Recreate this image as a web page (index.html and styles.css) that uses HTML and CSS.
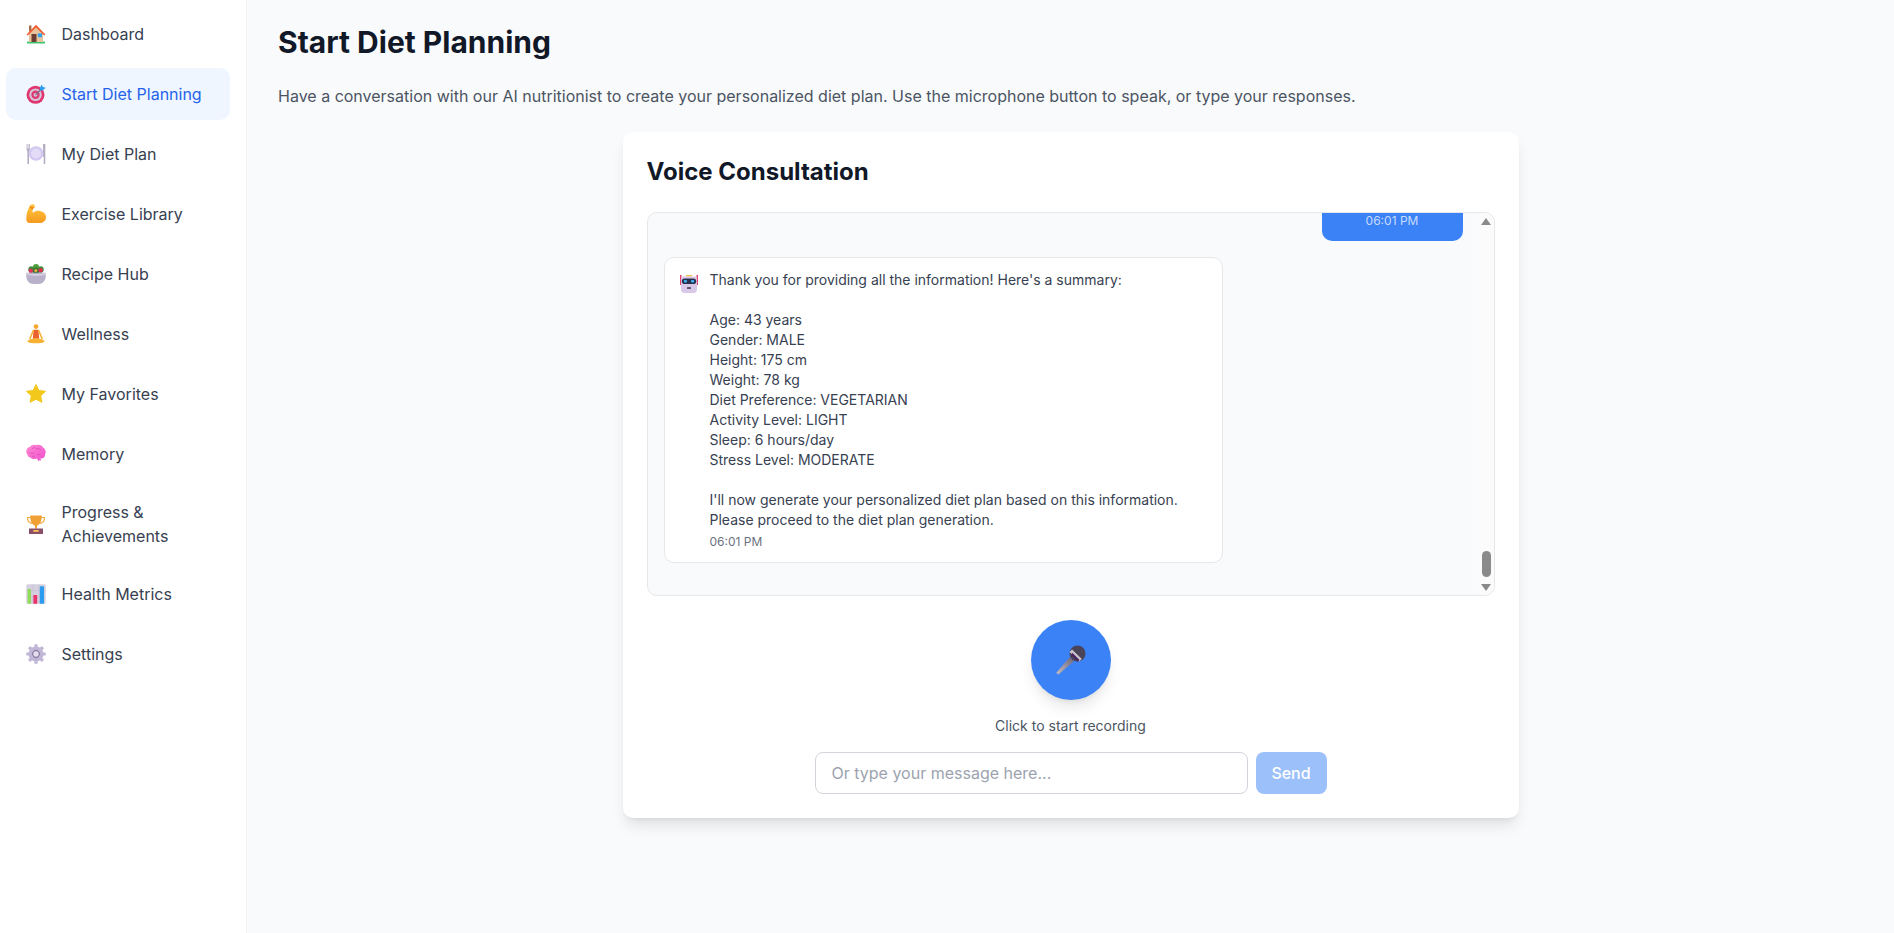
FILE: index.html
```html
<!DOCTYPE html>
<html lang="en">
<head>
<meta charset="utf-8">
<title>Start Diet Planning</title>
<link rel="stylesheet" href="styles.css">
</head>
<body>
<div class="app">
  <nav class="sidebar">
    <a class="nav-item"><svg class="nav-icon" viewBox="0 0 20 20"><rect x="1" y="17.600" width="18" height="1.900" fill="#3fc46f"/><rect x="3" y="1.500" width="2.400" height="6" fill="#a56a4a"/><path d="M3 9.500 10 3.500l7 6V18H3z" fill="#e9c39b"/><path d="M.6 10.600 10 .8l9.400 9.800-1.200 1L10 3.400 1.800 11.600z" fill="#ef5a2e"/><rect x="5.500" y="10" width="5" height="8" fill="#6b3d33"/><rect x="11.800" y="9.400" width="4.200" height="3.800" fill="#2fa3ee"/></svg><span>Dashboard</span></a>
    <a class="nav-item active"><svg class="nav-icon" viewBox="0 0 20 20"><circle cx="9.500" cy="10.800" r="9" fill="#e0356f"/><circle cx="9.500" cy="10.800" r="6.300" fill="#d8c4d8"/><circle cx="9.500" cy="10.800" r="4.200" fill="#dc3a72"/><circle cx="9.500" cy="10.800" r="1.900" fill="#d8c4d8"/><path d="M9.500 10.800 16 4.300" stroke="#6d6f86" stroke-width="1.200"/><path d="M13.800 4.200 15.600.4l1.300 2.700 2.900.7-3 2.400-2.700.6z" fill="#2c9cf0"/></svg><span>Start Diet Planning</span></a>
    <a class="nav-item"><svg class="nav-icon" viewBox="0 0 20 20"><path d="M.6 0v6l.8 1.400V20h1.600V7.400L3.800 6V0H3v4.500h-.5V0h-.5v4.500h-.5V0z" fill="#b4aec2"/><path d="M17 0h2.300v20H17.700v-7H17z" fill="#b4aec2"/><circle cx="10" cy="9.500" r="7.300" fill="#d3c8f0"/><circle cx="10" cy="9.500" r="4.900" fill="#e3dcf6"/></svg><span>My Diet Plan</span></a>
    <a class="nav-item"><svg class="nav-icon" viewBox="0 0 20 20"><defs><linearGradient id="arm" x1="0" y1="0" x2="0" y2="1"><stop offset="0" stop-color="#ffc83d"/><stop offset="1" stop-color="#f59a1f"/></linearGradient></defs><path d="M.3 15C.3 10 1.500 6 3.500 2.500 4 .8 6 0 7.500.5 9 1 9.500 2.500 8.500 3.600 7.500 4.500 6.600 5 6.500 6 6.400 7 6.600 8 7 9 8.500 7.300 11 6.700 13.500 6.900 17 7.200 20 9.500 20 13 20 16.500 17.500 19 14 19H3.500C1.500 19 .3 17.500.3 15z" fill="url(#arm)"/><path d="M3.500 2.500C5 2.200 6.800 2.800 8.500 3.600 7.500 4.500 6.600 5 6.500 6 5.200 5.200 4 4 3.500 2.500z" fill="#f08b1f"/></svg><span>Exercise Library</span></a>
    <a class="nav-item"><svg class="nav-icon" viewBox="0 0 20 20"><circle cx="5.500" cy="5.500" r="3.200" fill="#3f8f3f"/><circle cx="14.500" cy="5.500" r="3.200" fill="#3f8f3f"/><circle cx="10" cy="3" r="3" fill="#4c9c3c"/><circle cx="10" cy="7" r="3.200" fill="#356f35"/><circle cx="4.800" cy="6.800" r="2.200" fill="#e0335a"/><circle cx="14.600" cy="6.300" r="2.300" fill="#d8304e"/><circle cx="9.800" cy="6.500" r="1.500" fill="#f0b03a"/><path d="M.3 8.800h19.400v3.200c0 4.500-3 8-7 8H7.300c-4 0-7-3.500-7-8z" fill="#b9b1ca"/><path d="M.3 8.800c2 1 4 1.300 9.700 1.300s7.700-.3 9.700-1.300v1.500c-2 1-4 1.400-9.700 1.400S2.300 11.300.3 10.300z" fill="#d8d3e2"/></svg><span>Recipe Hub</span></a>
    <a class="nav-item"><svg class="nav-icon" viewBox="0 0 20 20"><circle cx="10" cy="2.600" r="2.400" fill="#f5a833"/><path d="M7.600 5.800h4.800l.8 9H6.800z" fill="#e8622c"/><path d="M7.300 6.500 4 14.500M12.700 6.500 16 14.500" stroke="#f7b33d" stroke-width="1.700" stroke-linecap="round" fill="none"/><path d="M1 17.300c3-2.300 5.500-3 9-3s6 .7 9 3c-2 1.700-4 2-9 2s-7-.3-9-2z" fill="#f7b236"/></svg><span>Wellness</span></a>
    <a class="nav-item"><svg class="nav-icon" viewBox="0 0 20 20"><path d="m10 .5 2.900 6 6.600.8-4.800 4.500 1.200 6.500L10 15.200 4.100 18.300l1.200-6.500L.5 7.300l6.600-.8z" fill="#f2c81d" stroke="#f2c81d" stroke-linejoin="round"/></svg><span>My Favorites</span></a>
    <a class="nav-item"><svg class="nav-icon" viewBox="0 0 20 20"><defs><linearGradient id="brain" x1="0" y1="0" x2="1" y2="1"><stop offset="0" stop-color="#ff8ad0"/><stop offset="1" stop-color="#f04fd0"/></linearGradient></defs><path d="M.6 9C-.5 6 1.500 3 4 3 5 1 8 .3 10 1.200 12.500.2 16 1 17 3.500 19.300 4.500 20.500 8 19 10.500 19.300 13 17 15 14.500 14.500L15 17 13.500 16 12.500 17.500 11 14.500C8 15.500 5.500 15 4.500 13.500 2.500 13.500 1.500 11.500.6 9z" fill="url(#brain)"/><path d="M6 4.500c2-1.200 4-.8 5 .6 1.500-.8 3.200-.4 4 1M3.500 8.500c1.500 1 3.500 1 5 0M11 10c1 1 2.500 1 3.500.2M6 12c1 .6 2 .6 3 0" fill="none" stroke="#d94bb2" stroke-width=".8"/></svg><span>Memory</span></a>
    <a class="nav-item"><svg class="nav-icon" viewBox="0 0 20 20"><path d="M4.500 3.500H1.500c0 3.500 1.600 5.500 4.500 5.800M15.500 3.500h3c0 3.500-1.600 5.500-4.500 5.800" fill="none" stroke="#f2a93b" stroke-width="1.200"/><path d="M4.200 1.500h11.600c.2 5.500-1.800 9.300-4.800 10.300v2.700H9v-2.700C6 10.800 4 7 4.200 1.500z" fill="#f0a035"/><path d="M3 14.500h14V20H3z" fill="#8a4f66"/><rect x="7.300" y="16" width="5.400" height="1.800" fill="#f6c253"/></svg><span>Progress &amp; Achievements</span></a>
    <a class="nav-item"><svg class="nav-icon" viewBox="0 0 20 20"><rect x=".3" y=".2" width="19.400" height="19.600" rx="1.500" fill="#d5d0df"/><path d="M7 .2v19.600M13 .2v19.600M.3 6.500h19.400M.3 13h19.400" stroke="#c1bbcc" stroke-width=".5"/><rect x="1.600" y="5" width="3.400" height="14.800" rx=".6" fill="#8fdc5b"/><rect x="7.400" y="11" width="3.800" height="8.800" rx=".6" fill="#e9336b"/><rect x="13.800" y="2.200" width="4.200" height="17.600" rx=".6" fill="#2c9cf0"/></svg><span>Health Metrics</span></a>
    <a class="nav-item"><svg class="nav-icon" viewBox="0 0 20 20"><circle cx="10" cy="10" r="5.800" fill="none" stroke="#c0b6d6" stroke-width="3.400"/><path d="M10 .3v3.400M10 16.300v3.400M.3 10h3.400M16.300 10h3.400M3.100 3.100l2.400 2.400M14.500 14.500l2.400 2.400M16.900 3.100l-2.400 2.400M5.500 14.500l-2.400 2.400" stroke="#c0b6d6" stroke-width="3.200"/><circle cx="10" cy="10" r="3.400" fill="#e4deee" stroke="#8f82a6" stroke-width="1.500"/></svg><span>Settings</span></a>
  </nav>
  <main class="main">
    <h1 class="title">Start Diet Planning</h1>
    <p class="intro">Have a conversation with our AI nutritionist to create your personalized diet plan. Use the microphone button to speak, or type your responses.</p>
    <section class="card">
      <h2 class="card-title">Voice Consultation</h2>
      <div class="chat">
        <div class="bubble-user"><span class="time-user">06:01 PM</span></div>
        <div class="bubble-ai">
          <svg class="ai-icon" viewBox="0 0 18 18"><rect x="6" y="0" width="6" height="1.600" fill="#f2c54a"/><rect x="0" y="0" width="1.500" height="10" fill="#e8416f"/><rect x="16.500" y="0" width="1.500" height="10" fill="#e8416f"/><path d="M1 3.500Q1 1.500 3 1.500H15Q17 1.500 17 3.500V14Q17 18 13.500 18H4.500Q1 18 1 14z" fill="#d9c8e8"/><rect x="1.800" y="3.500" width="14.400" height="5.600" rx="2.800" fill="#29304f"/><rect x="3.800" y="5.100" width="3.200" height="2.400" rx="1" fill="#3fb2f0"/><rect x="11" y="5.100" width="3.200" height="2.400" rx="1" fill="#3fb2f0"/><rect x="7" y="12" width="4" height="2" rx=".5" fill="#5a5470"/></svg>
          <div class="ai-body">
            <p class="ai-text">Thank you for providing all the information! Here's a summary:

Age: 43 years
Gender: MALE
Height: 175 cm
Weight: 78 kg
Diet Preference: VEGETARIAN
Activity Level: LIGHT
Sleep: 6 hours/day
Stress Level: MODERATE

I'll now generate your personalized diet plan based on this information.
Please proceed to the diet plan generation.</p>
            <span class="time-ai">06:01 PM</span>
          </div>
        </div>
        <div class="scrollbar">
          <span class="arrow-up"></span>
          <span class="thumb"></span>
          <span class="arrow-down"></span>
        </div>
      </div>
      <div class="voice">
        <button class="mic" type="button" aria-label="Start recording"><svg class="mic-icon" viewBox="0 0 32 32"><defs><linearGradient id="handle" x1="0" y1="1" x2="1" y2="0"><stop offset="0" stop-color="#c4bcc4"/><stop offset="1" stop-color="#6f6676"/></linearGradient></defs><path d="M1.200 28.700 15 13l4 4L3.500 30.500z" fill="url(#handle)"/><circle cx="22.500" cy="9.500" r="8" fill="#4a4458"/><path d="m14.500 8 2.600-2.600L26.800 15l-2.600 2.600z" fill="#c9c4cc"/><path d="m16 10.500 1.500-1.500 7 7-1.500 1.500z" fill="#47205f"/></svg></button>
        <p class="hint">Click to start recording</p>
      </div>
      <form class="composer">
        <input class="text-input" type="text" placeholder="Or type your message here...">
        <button class="send" type="button">Send</button>
      </form>
    </section>
  </main>
</div>
</body>
</html>
```
FILE: styles.css
```css
* { box-sizing: border-box; }
html, body { margin: 0; height: 100%; }
body {
  font-family: Inter, "Liberation Sans", sans-serif;
  background: #f9fafb;
  color: #111827;
}
.app { display: flex; height: 933px; overflow: hidden; }
.sidebar {
  width: 247px;
  flex: none;
  background: #fff;
  border-right: 1px solid #f3f4f6;
  padding: 8px 16px 8px 6px;
  display: flex;
  flex-direction: column;
  gap: 8px;
}
.nav-item {
  display: flex;
  align-items: center;
  gap: 15.500px;
  padding: 12px 20px;
  min-height: 52px;
  border-radius: 10px;
  font-size: 16px;
  line-height: 24px;
  color: #374151;
}
.nav-item.active { background: #eff6ff; color: #2563eb; }
.nav-icon { width: 20px; height: 20px; flex: none; }
.main { flex: 1; min-width: 0; padding: 24px 31px 32px 31px; }
.title { margin: 0; font-size: 30px; line-height: 36px; font-weight: 700; }
.intro { margin: 24px 0 0; font-size: 16px; line-height: 24px; color: #4b5563; }
.card {
  width: 896px;
  margin: 24px auto 0;
  padding: 24px;
  background: #fff;
  border-radius: 10px;
  box-shadow: 0 10px 15px -3px rgba(0,0,0,.1), 0 4px 6px -4px rgba(0,0,0,.1);
}
.card-title { margin: 0 0 24px; font-size: 24px; line-height: 32px; font-weight: 700; }
.chat {
  position: relative;
  height: 384px;
  overflow: hidden;
  background: #f9fafb;
  border: 1px solid #e5e7eb;
  border-radius: 10px;
  padding: 0 31px 32px 16px;
  display: flex;
  flex-direction: column;
  justify-content: flex-end;
  align-items: flex-start;
}
.bubble-user {
  align-self: flex-end;
  flex: none;
  width: 141px;
  height: 28px;
  margin-bottom: 16px;
  background: #3b82f6;
  border-radius: 0 0 10px 10px;
  display: flex;
  align-items: flex-end;
  justify-content: center;
  padding-bottom: 12px;
}
.time-user { font-size: 12px; line-height: 16px; color: #c7dcfd; }
.bubble-ai {
  flex: none;
  width: 559.500px;
  display: flex;
  gap: 11.500px;
  padding: 12px 16px 12px 15.500px;
  background: #fff;
  border: 1px solid #e5e7eb;
  border-radius: 10px;
}
.ai-icon { width: 18px; height: 18px; flex: none; margin-top: 5px; }
.ai-body { min-width: 0; }
.ai-text { margin: 0; font-size: 14px; line-height: 20px; color: #374151; white-space: pre-wrap; }
.time-ai { display: block; margin-top: 4px; font-size: 12px; line-height: 16px; color: #6b7280; }
.scrollbar {
  position: absolute;
  top: 0;
  right: 0;
  bottom: 0;
  width: 15px;
  background: #fbfbfb;
  display: flex;
  flex-direction: column;
  align-items: center;
  padding: 5px 0 4px;
}
.arrow-up, .arrow-down { width: 0; height: 0; border-left: 5px solid transparent; border-right: 5px solid transparent; }
.arrow-up { border-bottom: 7px solid #8a8a8a; }
.arrow-down { border-top: 7px solid #8a8a8a; }
.thumb { width: 9px; height: 26px; margin-top: auto; margin-bottom: 7px; border-radius: 5px; background: #8a8a8a; }
.voice { display: flex; flex-direction: column; align-items: center; margin-top: 24px; }
.mic {
  width: 80px;
  height: 80px;
  padding: 0;
  border: 0;
  border-radius: 50%;
  background: #3b82f6;
  box-shadow: 0 10px 15px -3px rgba(0,0,0,.1), 0 4px 6px -4px rgba(0,0,0,.1);
  display: flex;
  align-items: center;
  justify-content: center;
}
.mic-icon { width: 32px; height: 32px; }
.hint { margin: 16px 0 0; font-size: 14px; line-height: 20px; color: #4b5563; }
.composer { display: flex; justify-content: center; gap: 8px; margin-top: 16px; }
.text-input {
  width: 433px;
  height: 42px;
  padding: 8px 16px;
  border: 1px solid #d1d5db;
  border-radius: 8px;
  font: 16px/24px Inter, "Liberation Sans", sans-serif;
  background: #fff;
}
.text-input::placeholder { color: #9ca3af; opacity: 1; }
.send {
  width: 71px;
  height: 42px;
  border: 0;
  border-radius: 8px;
  background: #3b82f6;
  opacity: .5;
  color: #fff;
  font: 500 16px/24px Inter, "Liberation Sans", sans-serif;
  padding: 0;
}
```
